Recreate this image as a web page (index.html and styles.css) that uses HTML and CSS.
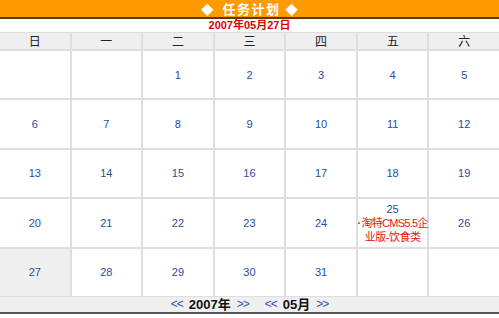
FILE: index.html
```html
<!DOCTYPE html>
<html lang="zh-CN">
<head>
<meta charset="utf-8">
<title>任务计划</title>
<link rel="stylesheet" href="styles.css">
</head>
<body>
<div class="page">
  <div class="title"><span class="dia">◆</span><span class="title-text">任务计划</span><span class="dia">◆</span></div>
  <div class="date">2007年05月27日</div>
  <div class="cal">
    <div class="wd">日</div><div class="wd">一</div><div class="wd">二</div><div class="wd">三</div><div class="wd">四</div><div class="wd">五</div><div class="wd">六</div>

    <div class="day"></div><div class="day"></div><div class="day">1</div><div class="day">2</div><div class="day">3</div><div class="day">4</div><div class="day">5</div>
    <div class="day">6</div><div class="day">7</div><div class="day">8</div><div class="day">9</div><div class="day">10</div><div class="day">11</div><div class="day">12</div>
    <div class="day">13</div><div class="day">14</div><div class="day">15</div><div class="day">16</div><div class="day">17</div><div class="day">18</div><div class="day">19</div>
    <div class="day">20</div><div class="day">21</div><div class="day">22</div><div class="day">23</div><div class="day">24</div>
    <div class="day has-event"><span class="num">25</span><span class="event"><span class="ev-line first"><span class="dot">·</span>淘特CMS5.5企</span><span class="ev-line">业版-饮食类</span></span></div>
    <div class="day">26</div>
    <div class="day today">27</div><div class="day">28</div><div class="day">29</div><div class="day">30</div><div class="day">31</div><div class="day"></div><div class="day"></div>
  </div>
  <div class="foot">
    <span class="nav-group"><span class="arr">&lt;&lt;</span><b class="val">2007年</b><span class="arr">&gt;&gt;</span></span>
    <span class="nav-group"><span class="arr">&lt;&lt;</span><b class="val">05月</b><span class="arr">&gt;&gt;</span></span>
  </div>
</div>
</body>
</html>
```

FILE: styles.css
```css
html, body {
  margin: 0;
  padding: 0;
  background: #ffffff;
}

.page {
  width: 499px;
  font-family: "Liberation Sans", "Noto Sans CJK SC", sans-serif;
}

.title {
  height: 17px;
  background: #ff9900;
  border-bottom: 2px solid #5c3b0a;
  color: #ffffff;
  display: flex;
  justify-content: center;
  align-items: center;
  font-family: "Noto Sans CJK SC", sans-serif;
  font-size: 13px;
  font-weight: bold;
  line-height: 17px;
  overflow: visible;
}

.dia {
  font-size: 16px;
  line-height: 17px;
  font-family: "DejaVu Sans", sans-serif;
  font-weight: normal;
}

.title-text {
  line-height: 17px;
  margin: 0 5px 0 9px;
  letter-spacing: 1.5px;
}

.date {
  height: 13px;
  line-height: 13px;
  text-align: center;
  color: #dd0000;
  font-size: 11px;
  font-weight: bold;
  font-family: "Liberation Sans", "Noto Sans CJK SC", sans-serif;
}

.cal {
  display: grid;
  grid-template-columns: repeat(7, minmax(0, 1fr));
  grid-template-rows: 16px repeat(5, 47.4px);
  gap: 2px;
  background: #dedede;
  padding: 1px 0 1px;
}

.wd {
  background: #efefef;
  color: #222222;
  font-family: "Noto Sans CJK SC", sans-serif;
  font-size: 12px;
  line-height: 16px;
  text-align: center;
}

.day {
  min-width: 0;
  background: #ffffff;
  color: #1f4e9c;
  font-size: 11px;
  display: flex;
  flex-direction: column;
  justify-content: center;
  align-items: center;
  text-align: center;
}

.day.today {
  background: #efefef;
}

.has-event {
  line-height: 14px;
}

.event {
  display: flex;
  flex-direction: column;
  align-items: center;
  color: #ee1111;
  font-size: 11px;
  line-height: 14px;
  font-family: "Liberation Sans", "Noto Sans CJK SC", sans-serif;
}

.ev-line {
  white-space: nowrap;
  letter-spacing: -0.5px;
}

.ev-line.first {
  letter-spacing: -0.7px;
}

.dot {
  font-weight: bold;
  margin-right: 1px;
}

.foot {
  height: 15px;
  background: #efefef;
  border-bottom: 2px solid #555555;
  display: flex;
  justify-content: center;
  align-items: center;
  gap: 16px;
  font-size: 12px;
  line-height: 15px;
}

.nav-group {
  display: flex;
  align-items: center;
  gap: 6px;
}

.arr {
  color: #2a55a8;
  font-family: "Liberation Sans", sans-serif;
  font-size: 12px;
  font-weight: normal;
  letter-spacing: -1px;
}

.val {
  color: #111111;
  font-family: "Liberation Sans", "Noto Sans CJK SC", sans-serif;
  font-size: 13px;
  font-weight: bold;
}
```
